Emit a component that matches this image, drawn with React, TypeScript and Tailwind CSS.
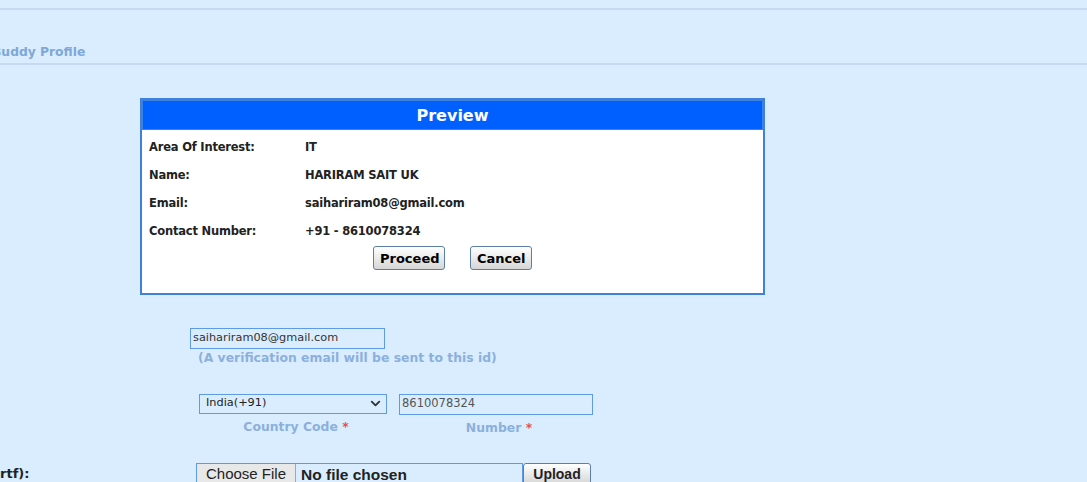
import { ChevronDown } from 'lucide-react';

const rows = [
    { label: 'Area Of Interest:', value: 'IT' },
    { label: 'Name:', value: 'HARIRAM SAIT UK' },
    { label: 'Email:', value: 'saihariram08@gmail.com' },
    { label: 'Contact Number:', value: '+91 - 8610078324' },
];

const btn =
    'h-[24px] rounded-[3px] border border-[#5b7fa8] bg-gradient-to-b from-[#ffffff] to-[#d6d6d6] px-[6px] text-[13px] font-bold text-black leading-none';

function App() {
    return (
        <div className="min-h-screen w-full overflow-hidden bg-[#d9edff] font-['DejaVu_Sans',sans-serif]">
            <div className="h-[8px]" />
            <div className="h-[2px] bg-[#c4dbef]" />
            <div className="flex h-[53px] items-end pb-[2px]">
                <h2 className="ml-[-8px] text-[12.3px] font-bold text-[#7ea7d8]">Buddy Profile</h2>
            </div>
            <div className="h-[2px] bg-[#c4dbef]" />

            <div className="ml-[140px] mt-[33px] h-[197px] w-[625px] border-2 border-[#3d80de] bg-white">
                <div className="flex h-[30px] items-center justify-center border border-[#3d80de] bg-[#0060ff] pt-[1px] text-[16px] font-bold text-white">
                    Preview
                </div>
                <div className="pl-[7px] pt-[4px]">
                    {rows.map((row) => (
                        <div key={row.label} className="flex h-[28px] items-center text-[11.5px] font-bold tracking-[-0.2px] text-[#222]">
                            <span className="w-[156px]">{row.label}</span>
                            <span>{row.value}</span>
                        </div>
                    ))}
                </div>
                <div className="flex justify-center gap-[25px]">
                    <button className={`${btn} w-[72px]`}>Proceed</button>
                    <button className={`${btn} w-[62px]`}>Cancel</button>
                </div>
            </div>

            <div className="ml-[190px] mt-[33px]">
                <div className="flex h-[21px] w-[195px] items-center border border-[#5f9ae8] bg-[#d9edff] px-[2px] text-[11.3px] text-[#333]">
                    saihariram08@gmail.com
                </div>
                <p className="ml-[8px] mt-[0px] text-[12.4px] font-bold text-[#8cb0dc]">
                    (A verification email will be sent to this id)
                </p>
            </div>

            <div className="ml-[199px] mt-[26px] flex gap-[12px]">
                <div className="flex flex-col items-center">
                    <div className="flex h-[20px] w-[188px] items-center justify-between border border-[#5f9ae8] bg-[#d9edff] pl-[6px] pr-[3px] text-[11.3px] text-[#222]">
                        <span>India(+91)</span>
                        <ChevronDown size={15} strokeWidth={3} className="text-[#333]" />
                    </div>
                    <p className="mt-[4px] pl-[6px] text-[12.4px] font-bold text-[#8cb0dc]">
                        Country Code <span className="text-[#e0505a]">*</span>
                    </p>
                </div>
                <div className="flex flex-col items-center">
                    <div className="flex h-[21px] w-[194px] items-center border border-[#5f9ae8] bg-[#d9edff] px-[2px] text-[11.5px] text-[#555]">
                        8610078324
                    </div>
                    <p className="mt-[4px] pl-[6px] text-[12.4px] font-bold text-[#8cb0dc]">
                        Number <span className="text-[#e0505a]">*</span>
                    </p>
                </div>
            </div>

            <div className="mt-[26px] flex items-start">
                <span className="mt-[1px] w-[196px] text-[13px] font-bold text-[#222]">rtf):</span>
                <div className="flex h-[22px] w-[327px] items-center border border-[#5f9ae8] bg-[#d9edff] font-['Liberation_Sans',sans-serif]">
                    <span className="flex h-full w-[99px] items-center border-r border-[#9aa] bg-[#e8e8e8] pl-[9px] text-[15px] text-[#222]">Choose File</span>
                    <span className="pl-[5px] text-[15.5px] font-bold text-[#222]">No file chosen</span>
                </div>
                <button className="h-[22px] w-[68px] rounded-t-[3px] border border-[#5b7fa8] bg-gradient-to-b from-[#ffffff] to-[#d6d6d6] font-['Liberation_Sans',sans-serif] text-[14px] font-bold text-[#222]">
                    Upload
                </button>
            </div>
        </div>
    );
}
export default App;
